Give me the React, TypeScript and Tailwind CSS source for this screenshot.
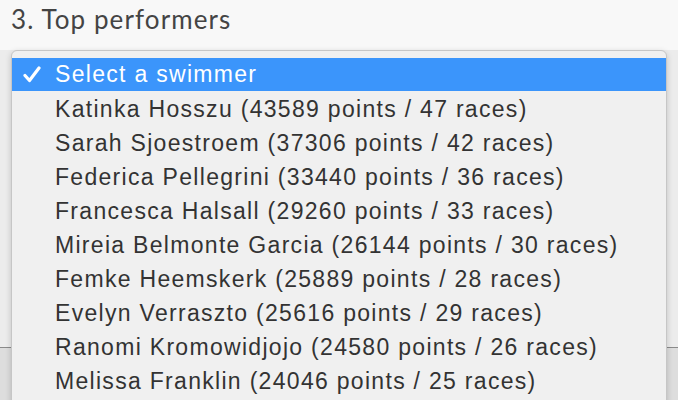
import React from "react";

const swimmers = [
  "Katinka Hosszu (43589 points / 47 races)",
  "Sarah Sjoestroem (37306 points / 42 races)",
  "Federica Pellegrini (33440 points / 36 races)",
  "Francesca Halsall (29260 points / 33 races)",
  "Mireia Belmonte Garcia (26144 points / 30 races)",
  "Femke Heemskerk (25889 points / 28 races)",
  "Evelyn Verraszto (25616 points / 29 races)",
  "Ranomi Kromowidjojo (24580 points / 26 races)",
  "Melissa Franklin (24046 points / 25 races)",
];

export default function App() {
  return (
    <div className="w-[678px] h-[400px] overflow-hidden bg-[#f8f8f8] relative">
      <h1
        className="pl-[11px] pt-[2px] h-[50px] text-[26px] leading-[34px] tracking-[1.1px] text-[#444444]"
        style={{ fontFamily: "Lato, 'Noto Sans', sans-serif", fontWeight: 400 }}
      >
        3. Top performers
      </h1>

      {/* page behind the open menu */}
      <div className="relative">
        <div className="h-[298px] bg-[#ececec] border-b border-[#8a8a8a]" />
        <div className="h-[52px] bg-[#dddddd]" />

        {/* ── Dropdown menu ── */}
        <div
          className="absolute left-[11px] top-0 w-[656px] h-[360px] rounded-t-[6px] border border-[#c6c6c6] bg-[#f0f0f0] pt-[7px] shadow-[0_2px_6px_rgba(0,0,0,0.18)] text-[23px] tracking-[1.3px]"
          style={{ fontFamily: "'Liberation Sans', Arial, sans-serif" }}
        >
          <div className="h-[33px] mb-px bg-[#3b95fb] flex items-center text-white">
            <span className="w-[43px] flex pl-[11px]">
              <svg width="18" height="17" viewBox="0 0 18 17">
                <path
                  d="M2 9.5 L6.5 14.5 L16 2"
                  fill="none"
                  stroke="#fff"
                  strokeWidth="3.2"
                  strokeLinecap="round"
                  strokeLinejoin="round"
                />
              </svg>
            </span>
            <span>Select a swimmer</span>
          </div>
          {swimmers.map((s) => (
            <div key={s} className="h-[34px] flex items-center pl-[43px] text-[#333333]">
              {s}
            </div>
          ))}
        </div>
      </div>
    </div>
  );
}
